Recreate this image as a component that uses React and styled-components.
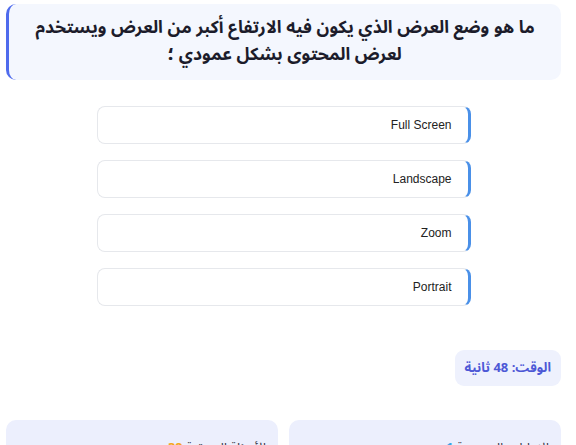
import React from "react";
import styled, { createGlobalStyle } from "styled-components";

const GlobalStyle = createGlobalStyle`
  html, body {
    margin: 0;
    padding: 0;
    background: #ffffff;
  }
  body {
    font-family: "Noto Sans Arabic", "Noto Sans", "DejaVu Sans", sans-serif;
  }
`;

const Page = styled.div`
  direction: rtl;
  padding: 4px 15px 0 6px;
  display: flex;
  flex-direction: column;
`;

const QuestionCard = styled.div`
  background: #f4f7fe;
  border-left: 3px solid #4f6bed;
  border-radius: 10px;
  padding: 10px 10px 12px;
  text-align: center;
  font-size: 17.5px;
  font-weight: 700;
  line-height: 27px;
  color: #1c1c2b;
`;

const Options = styled.div`
  display: flex;
  flex-direction: column;
  align-items: center;
  gap: 16px;
  margin-top: 26px;
`;

const Option = styled.button`
  width: 374px;
  height: 38px;
  box-sizing: border-box;
  background: #ffffff;
  border: 1px solid #e6e8ec;
  border-right: 3px solid #4a90e8;
  border-radius: 8px;
  padding: 0 16px;
  text-align: right;
  direction: ltr;
  font-family: "Liberation Sans", Arial, sans-serif;
  font-size: 12px;
  color: #222222;
  cursor: pointer;
`;

const TimerRow = styled.div`
  display: flex;
  justify-content: flex-start;
  margin-top: 44px;
`;

const Timer = styled.div`
  height: 36px;
  box-sizing: border-box;
  padding: 0 10px;
  display: flex;
  align-items: center;
  background: #eef1fd;
  border-radius: 9px;
  color: #4d58d6;
  font-size: 13px;
  font-weight: 700;
`;

const Stats = styled.div`
  display: grid;
  grid-template-columns: 1fr 1fr;
  gap: 11px;
  margin-top: 34px;
`;

const StatCard = styled.div`
  background: #eceffd;
  border-radius: 10px;
  padding: 14px 12px;
  font-size: 13px;
  color: #333344;
  height: 60px;
`;

const Num = styled.span`
  color: ${(p) => p.$color};
  font-weight: 700;
`;

const options = ["Full Screen", "Landscape", "Zoom", "Portrait"];

export default function App() {
  return (
    <>
      <GlobalStyle />
      <Page>
        <QuestionCard>
          ما هو وضع العرض الذي يكون فيه الارتفاع أكبر من العرض ويستخدم
          <br />
          لعرض المحتوى بشكل عمودي ؛
        </QuestionCard>
        <Options>
          {options.map((o) => (
            <Option key={o}>{o}</Option>
          ))}
        </Options>
        <TimerRow>
          <Timer>الوقت: 48 ثانية</Timer>
        </TimerRow>
        <Stats>
          <StatCard>
            الإجابات الصحيحة <Num $color="#3ba4e6">1</Num>
          </StatCard>
          <StatCard>
            الأسئلة المتبقية <Num $color="#f5a623">39</Num>
          </StatCard>
        </Stats>
      </Page>
    </>
  );
}
